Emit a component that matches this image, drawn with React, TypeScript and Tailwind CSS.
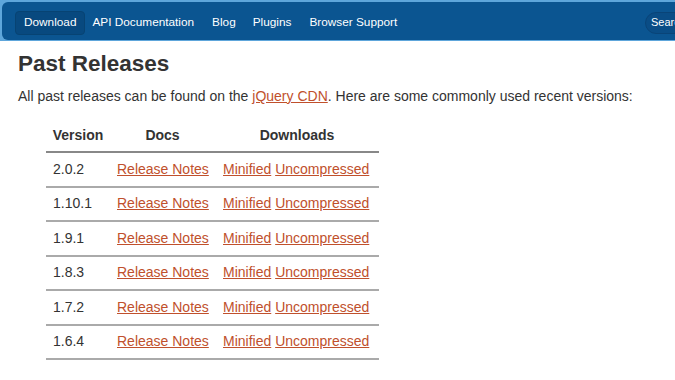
import React from "react";

const rows = ["2.0.2", "1.10.1", "1.9.1", "1.8.3", "1.7.2", "1.6.4"];

export default function App() {
  const font = { fontFamily: '"Liberation Sans", Arial, Helvetica, sans-serif' };
  return (
    <div className="w-[675px] h-[380px] overflow-hidden bg-white" style={font}>
      <div className="bg-[#5ea6db] pt-[2px] pb-[1px] pl-[2px]">
        <div className="h-[38px] bg-[#0b5591] rounded-l-[6px] flex items-center pt-[3px] pl-[13px] text-white text-[11.8px]">
          <div className="h-[24px] px-[8px] flex items-center rounded-[4px] bg-[#08497f] border border-[#074373] mr-[7px]">
            Download
          </div>
          <span className="mr-[18px]">API Documentation</span>
          <span className="mr-[17px]">Blog</span>
          <span className="mr-[18px]">Plugins</span>
          <span>Browser Support</span>
          <div className="ml-auto h-[22px] w-[40px] mr-[-10px] rounded-full bg-[#0a4d86] border border-[#094478] flex items-center pl-[5px] text-[11px]">
            Search
          </div>
        </div>
      </div>
      <div className="pl-[18px] text-[#333]">
        <h1 className="text-[22.5px] font-bold mt-[9px] leading-[28px]">Past Releases</h1>
        <p className="text-[14px] whitespace-nowrap mt-[8px] leading-[20px]">
          All past releases can be found on the{" "}
          <a className="text-[#c0502c] underline">jQuery CDN</a>. Here are some commonly used recent versions:
        </p>
        <table className="ml-[28px] mt-[15px] text-[14px] border-collapse w-[333px]">
          <thead>
            <tr className="border-b-2 border-[#888]">
              <th className="w-[64px] font-bold text-center h-[31px] pb-[2px]">Version</th>
              <th className="w-[105px] font-bold text-center pb-[2px]">Docs</th>
              <th className="font-bold text-center pb-[2px]">Downloads</th>
            </tr>
          </thead>
          <tbody>
            {rows.map((v) => (
              <tr key={v} className="border-b-2 border-[#aaa] h-[34.5px]">
                <td className="pl-[7px]">{v}</td>
                <td className="pl-[7px]">
                  <a className="text-[#c0502c] underline">Release Notes</a>
                </td>
                <td className="pl-[8px]">
                  <a className="text-[#c0502c] underline">Minified</a>{" "}
                  <a className="text-[#c0502c] underline">Uncompressed</a>
                </td>
              </tr>
            ))}
          </tbody>
        </table>
      </div>
    </div>
  );
}
